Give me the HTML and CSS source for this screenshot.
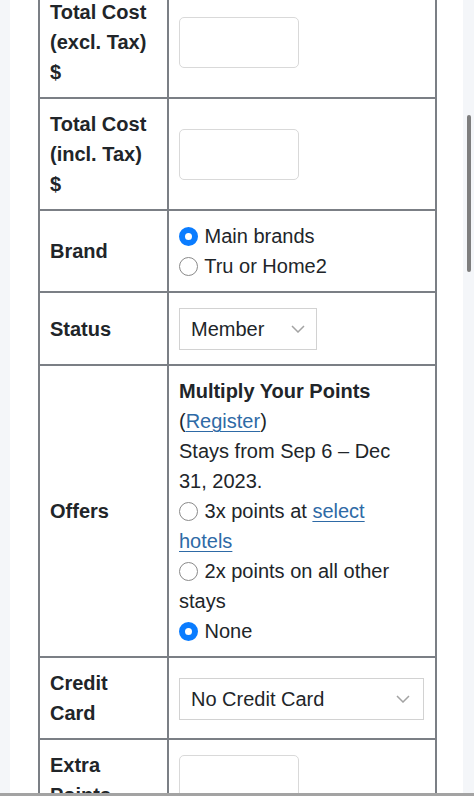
FILE: index.html
```html
<!DOCTYPE html>
<html lang="en">
<head>
<meta charset="utf-8">
<title>Points Calculator</title>
<link rel="stylesheet" href="styles.css">
</head>
<body>
<div class="page">
  <table class="calc">
    <colgroup><col class="c-label"><col class="c-value"></colgroup>
    <tr>
      <th>Total Cost (excl. Tax) $</th>
      <td><input class="num" type="text"></td>
    </tr>
    <tr>
      <th>Total Cost (incl. Tax) $</th>
      <td><input class="num" type="text"></td>
    </tr>
    <tr>
      <th>Brand</th>
      <td>
        <label class="opt"><input type="radio" name="brand" checked> Main brands</label>
        <label class="opt"><input type="radio" name="brand"> Tru or Home2</label>
      </td>
    </tr>
    <tr>
      <th>Status</th>
      <td>
        <div class="select sel-status"><span>Member</span><svg class="chev" viewBox="0 0 14 8" width="14" height="8"><path d="M1 1l6 6 6-6"/></svg></div>
      </td>
    </tr>
    <tr>
      <th>Offers</th>
      <td>
        <div class="offers">
          <div class="offer-title">Multiply Your Points</div>
          <div>(<a href="#">Register</a>)</div>
          <div>Stays from Sep 6 – Dec 31, 2023.</div>
          <label class="opt"><input type="radio" name="offer"> 3x points at <a href="#">select hotels</a></label>
          <label class="opt"><input type="radio" name="offer"> 2x points on all other stays</label>
          <label class="opt"><input type="radio" name="offer" checked> None</label>
        </div>
      </td>
    </tr>
    <tr>
      <th>Credit Card</th>
      <td>
        <div class="select sel-card"><span>No Credit Card</span><svg class="chev" viewBox="0 0 14 8" width="14" height="8"><path d="M1 1l6 6 6-6"/></svg></div>
      </td>
    </tr>
    <tr>
      <th>Extra Points</th>
      <td><input class="num" type="text"></td>
    </tr>
    <tr>
      <th>Total Points</th>
      <td><input class="num" type="text"></td>
    </tr>
  </table>
</div>
<div class="scroll-thumb"></div>
<div class="bottom-bar"></div>
</body>
</html>
```

FILE: styles.css
```css
html, body {
  margin: 0;
  padding: 0;
}
body {
  background: #f4f6f9;
  font-family: "Liberation Sans", Arial, sans-serif;
  font-size: 20px;
  line-height: 30px;
  color: #212529;
  overflow: hidden;
  height: 796px;
}
.page {
  margin: 0 11px 0 10px;
  background: #fff;
  padding: 0 0 0 28px;
  min-height: 796px;
  overflow: hidden;
}
.calc {
  border-collapse: collapse;
  table-layout: fixed;
  width: 397px;
  margin-top: -15px;
}
.c-label { width: 129px; }
.c-value { width: 268px; }
.calc th, .calc td {
  border: 2px solid #7b7f85;
  padding: 10px;
  vertical-align: middle;
  text-align: left;
}
.calc th {
  font-weight: 700;
  padding-right: 11px;
}
.num {
  display: block;
  box-sizing: border-box;
  width: 120px;
  height: 51px;
  border: 1px solid #d9d9d9;
  border-radius: 5px;
  background: #fff;
  margin: 0;
  padding: 0;
}
.opt {
  display: block;
}
.opt input {
  -webkit-appearance: none;
  appearance: none;
  box-sizing: border-box;
  width: 19px;
  height: 19px;
  margin: 0 1px 0 0;
  border: 1.5px solid #8a8a8a;
  border-radius: 50%;
  background: #fff;
  vertical-align: -3px;
}
.opt input:checked {
  border: 6px solid #0a7cff;
}
a {
  color: #2e6aa6;
  text-decoration: underline;
  text-underline-offset: 3px;
  text-decoration-thickness: 1px;
}
.select {
  box-sizing: border-box;
  height: 42px;
  border: 1px solid #d2d2d2;
  background: #fff;
  display: flex;
  align-items: center;
  justify-content: space-between;
  padding: 0 11px 0 11px;
  margin: 5px 0 4px;
}
.sel-status { width: 138px; }
.sel-card { width: 245px; padding-right: 13px; }
.chev {
  fill: none;
  stroke: #a3a3a3;
  stroke-width: 1.5;
}
.offers {
  width: 230px;
}
.offer-title {
  font-weight: 700;
}
.scroll-thumb {
  position: fixed;
  left: 467px;
  top: 115px;
  width: 4px;
  height: 157px;
  border-radius: 2px;
  background: #7e7e7e;
}
.bottom-bar {
  position: fixed;
  left: 0;
  right: 0;
  bottom: 0;
  height: 3px;
  background: #a3a3a3;
}
```
